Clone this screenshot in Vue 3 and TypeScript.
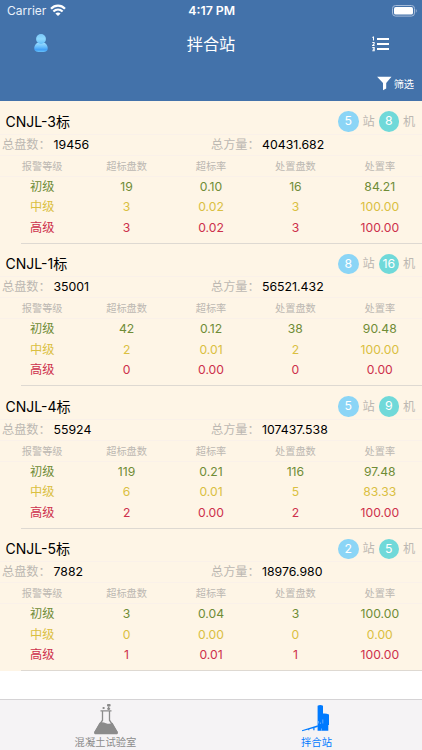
<script setup lang="ts">
interface Level {
  name: string
  tone: 'low' | 'mid' | 'high'
  values: string[]
}

interface Section {
  title: string
  stations: number
  machines: number
  plates: string
  volume: string
  levels: Level[]
}

const columns = ['报警等级', '超标盘数', '超标率', '处置盘数', '处置率']

function levels(low: string[], mid: string[], high: string[]): Level[] {
  return [
    { name: '初级', tone: 'low', values: low },
    { name: '中级', tone: 'mid', values: mid },
    { name: '高级', tone: 'high', values: high },
  ]
}

const sections: Section[] = [
  {
    title: 'CNJL-3标', stations: 5, machines: 8, plates: '19456', volume: '40431.682',
    levels: levels(['19', '0.10', '16', '84.21'], ['3', '0.02', '3', '100.00'], ['3', '0.02', '3', '100.00']),
  },
  {
    title: 'CNJL-1标', stations: 8, machines: 16, plates: '35001', volume: '56521.432',
    levels: levels(['42', '0.12', '38', '90.48'], ['2', '0.01', '2', '100.00'], ['0', '0.00', '0', '0.00']),
  },
  {
    title: 'CNJL-4标', stations: 5, machines: 9, plates: '55924', volume: '107437.538',
    levels: levels(['119', '0.21', '116', '97.48'], ['6', '0.01', '5', '83.33'], ['2', '0.00', '2', '100.00']),
  },
  {
    title: 'CNJL-5标', stations: 2, machines: 5, plates: '7882', volume: '18976.980',
    levels: levels(['3', '0.04', '3', '100.00'], ['0', '0.00', '0', '0.00'], ['1', '0.01', '1', '100.00']),
  },
]
</script>

<template>
  <div class="screen">
    <header class="top">
      <div class="status">
        <div class="carrier">
          <span>Carrier</span>
          <svg class="wifi" width="16" height="12" viewBox="0 0 16 12">
            <g fill="none" stroke="#fff" stroke-width="2.200">
              <path d="M1 4.700C5 .6 11 .6 15 4.700" />
              <path d="M3.400 7.500c2.700-2.600 6.500-2.600 9.200 0" />
            </g>
            <path d="M8 11.900 5.400 9.400c1.500-1.300 3.700-1.300 5.200 0Z" fill="#fff" />
          </svg>
        </div>
        <span class="clock">4:17 PM</span>
        <div class="battery-slot">
          <svg width="25" height="12" viewBox="0 0 25 12">
            <rect x=".5" y=".5" width="22" height="10.6" rx="3" fill="none" stroke="#a5bbd8" />
            <rect x="2" y="2" width="19" height="7.6" rx="1.7" fill="#fff" />
            <path d="M23.8 4v3.8c1.2-.5 1.2-3.3 0-3.8Z" fill="#a5bbd8" />
          </svg>
        </div>
      </div>
      <nav class="nav">
        <div class="nav-left">
          <svg width="16" height="19" viewBox="0 0 16 19">
            <defs>
              <linearGradient id="head" x1="0" y1="0" x2="0" y2="1">
                <stop offset="0" stop-color="#7cc8f8" />
                <stop offset=".5" stop-color="#8ed8fe" />
                <stop offset="1" stop-color="#62bdf8" />
              </linearGradient>
              <linearGradient id="body" x1="0" y1="0" x2="0" y2="1">
                <stop offset="0" stop-color="#9adcff" />
                <stop offset=".4" stop-color="#6cc0fc" />
                <stop offset=".75" stop-color="#3f9ff8" />
                <stop offset="1" stop-color="#6ec4f7" />
              </linearGradient>
            </defs>
            <path d="M4 9h8c2 1.300 3 3.700 2.700 6.200C14.500 17.200 12 18.100 8 18.100S1.500 17.200 1.300 15.200C1 12.700 2 10.300 4 9Z" fill="url(#body)" />
            <circle cx="8" cy="5" r="4.900" fill="url(#head)" />
          </svg>
        </div>
        <h1>拌合站</h1>
        <div class="nav-right">
          <svg width="18" height="16" viewBox="0 0 18 16">
            <path d="M5 3h12M5 8h12M5 13.100h12" stroke="#fff" stroke-width="2" fill="none" />
            <path d="M.4 1.500 1.500 1V4.400M.3 6.500h1.800V8L.6 9.500h2M.3 11.500h1.900v3.200H.3M.8 13.100h1.300" stroke="#fff" stroke-width="1.050" fill="none" />
          </svg>
        </div>
      </nav>
      <div class="filter">
        <svg width="15" height="15" viewBox="0 0 15 15">
          <path d="M.1.800h14.400L9.200 7v5.400l-3.200 1.900V7Z" fill="#fff" />
        </svg>
        <span>筛选</span>
      </div>
    </header>

    <main class="list">
      <section v-for="s in sections" :key="s.title" class="card">
        <div class="title-row">
          <h2>{{ s.title }}</h2>
          <div class="counts">
            <span class="badge station">{{ s.stations }}</span>
            <span class="unit">站</span>
            <span class="badge machine">{{ s.machines }}</span>
            <span class="unit">机</span>
          </div>
        </div>
        <div class="summary">
          <div class="total"><span class="label">总盘数：</span><span>{{ s.plates }}</span></div>
          <div class="total"><span class="label">总方量：</span><span>{{ s.volume }}</span></div>
        </div>
        <div class="grid heading">
          <span v-for="c in columns" :key="c">{{ c }}</span>
        </div>
        <div v-for="l in s.levels" :key="l.name" class="grid level" :class="l.tone">
          <span class="name">{{ l.name }}</span>
          <span v-for="(v, i) in l.values" :key="i">{{ v }}</span>
        </div>
        <div class="divider"></div>
      </section>
    </main>

    <footer class="tabs">
      <div class="tab">
        <svg width="28" height="32" viewBox="0 0 28 32">
          <g fill="none" stroke="#8b8b8b" stroke-width="1.300">
            <path d="M8.500 7.800h11M10.500 8.500v8.700L2.900 29q-.7 1.700 1.200 1.700h19.800q1.900 0 1.200-1.700L17.500 17.200V8.500" />
            <path d="M16.600 3.500V7" />
          </g>
          <path d="M7.500 19.700q3-.9 6.500.5t6.500-.5l5 9q.5 1.800-1 1.800h-21q-1.500 0-1-1.800Z" fill="#8b8b8b" />
          <rect x="15" y="1" width="3.600" height="2.600" rx=".8" fill="#8b8b8b" />
          <rect x="10.500" y="4" width="2.200" height="2" rx=".8" fill="#8b8b8b" />
          <rect x="15.200" y="4.700" width="3" height="2" rx=".8" fill="#8b8b8b" />
        </svg>
        <span>混凝土试验室</span>
      </div>
      <div class="tab active">
        <svg width="30" height="32" viewBox="0 0 30 32">
          <path d="M15.600 2.800q2.700-1.700 5.400 0v7.700q3-.5 6 1V22h-.7v5.800H15.600Z" fill="#007aff" />
          <path d="M-.2 27.300 15.800 22.300v1.600L-.2 28.300ZM6.300 26h1.100v1.300H6.300ZM11.300 24.300h1.200v3h-1.200Z" fill="#007aff" />
          <path d="M16.400 18v2.500M18.400 19.500v1.500M20.800 16.500v4M19.500 25.500v2.300" stroke="#8fc2fb" stroke-width=".7" />
        </svg>
        <span>拌合站</span>
      </div>
    </footer>
  </div>
</template>

<style>
body {
  margin: 0;
  background: #fff;
}
</style>

<style scoped>
.screen {
  display: flex;
  flex-direction: column;
  width: 422px;
  height: 750px;
  overflow: hidden;
  background: #fff;
  color: #000;
  font-family: Inter, "Noto Sans CJK SC", sans-serif;
}
.top {
  height: 101px;
  flex: none;
  background: #4372aa;
  color: #fff;
}
.status {
  display: grid;
  grid-template-columns: 1fr auto 1fr;
  align-items: center;
  height: 22px;
  padding: 0 5.5px 0 7px;
  font-size: 12px;
  line-height: 22px;
}
.carrier {
  display: flex;
  align-items: center;
  gap: 4px;
  color: #eaf1fa;
}
.wifi {
  margin-top: -2px;
}
.clock {
  font-size: 12.3px;
  font-weight: 600;
}
.battery-slot {
  display: flex;
  justify-content: flex-end;
}
.nav {
  display: grid;
  grid-template-columns: 1fr auto 1fr;
  align-items: center;
  height: 43px;
}
.nav-left {
  display: flex;
  padding-left: 33px;
}
.nav-right {
  display: flex;
  justify-content: flex-end;
  padding-right: 32px;
}
h1 {
  margin: 0;
  font-size: 16.2px;
  font-weight: 400;
  line-height: 24px;
}
.filter {
  display: flex;
  justify-content: flex-end;
  align-items: center;
  gap: 2px;
  height: 36px;
  padding-right: 8px;
  font-size: 10.2px;
}
.card {
  display: flex;
  flex-direction: column;
  height: 142.5px;
  background: #fef5e6;
}
.title-row {
  display: flex;
  justify-content: space-between;
  align-items: center;
  height: 32.7px;
  padding: 8.5px 7px 0 5.5px;
  box-sizing: border-box;
}
h2 {
  margin: 0;
  font-size: 14px;
  font-weight: 400;
  line-height: 20px;
}
.counts {
  display: flex;
  align-items: center;
}
.badge {
  width: 20.5px;
  height: 20.5px;
  border-radius: 50%;
  color: #fff;
  font-size: 12.3px;
  line-height: 20.5px;
  text-align: center;
}
.station {
  background: #8bd5f6;
}
.machine {
  background: #70d9d9;
}
.unit {
  width: 12px;
  margin: 0 4px;
  color: #bcb8b2;
  font-size: 12.2px;
  line-height: 20px;
}
.unit:last-child {
  margin-right: 0;
}
.summary {
  display: grid;
  grid-template-columns: 1fr 1fr;
  height: 21px;
  border-top: 1px solid #faf1e9;
  box-sizing: border-box;
  font-size: 12.3px;
  line-height: 20px;
}
.total {
  display: flex;
}
.label {
  width: 51px;
  padding-left: 2px;
  box-sizing: border-box;
  margin-right: 2.5px;
  color: #bcb8b2;
  font-size: 12.2px;
  white-space: nowrap;
}
.total + .total .label {
  padding-left: 0;
  margin-right: 0;
}
.grid {
  display: grid;
  grid-template-columns: repeat(5, 1fr);
  text-align: center;
}
.heading {
  height: 22px;
  border-top: 1px solid #faf1e9;
  border-bottom: 1px solid #faf1e9;
  box-sizing: border-box;
  color: #bcb8b2;
  font-size: 10.2px;
  line-height: 20.5px;
}
.level {
  height: 20.5px;
  font-size: 12.2px;
  line-height: 20.6px;
}
.low {
  color: #6f8c36;
}
.mid {
  color: #dabf41;
}
.high {
  color: #cd2f4b;
}
.divider {
  height: 1px;
  margin: auto 0 0 21px;
  background: #ded9d2;
}
.tabs {
  display: grid;
  grid-template-columns: 1fr 1fr;
  height: 51px;
  box-sizing: border-box;
  margin-top: auto;
  border-top: 1px solid #d5d3d5;
  background: #f5f3f5;
}
.tab {
  display: flex;
  flex-direction: column;
  align-items: center;
  padding-top: 3px;
  color: #8b8b8b;
  font-size: 10.3px;
  line-height: 15px;
}
.active {
  color: #007aff;
}
</style>
